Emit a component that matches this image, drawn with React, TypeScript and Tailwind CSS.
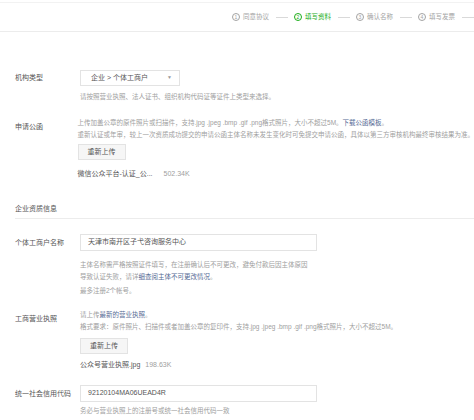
import React from "react";

const font = { fontFamily: '"Liberation Sans", "Noto Sans CJK SC", sans-serif' };

function Step({ n, label, active }: { n: string; label: string; active?: boolean }) {
  const c = active ? "text-[#1aad19] border-[#1aad19]" : "text-[#a3a3a3] border-[#a3a3a3]";
  return (
    <div className="flex items-center shrink-0">
      <span className={`w-[8px] h-[8px] rounded-full border-[0.8px] flex items-center justify-center text-[5px] leading-none ${c}`}>{n}</span>
      <span className={`ml-[3px] text-[6.5px] leading-none ${active ? "text-[#1aad19]" : "text-[#a3a3a3]"}`}>{label}</span>
      <span className="ml-[7px] mr-[6px] w-[12px] h-px bg-[#d9d9d9]" />
    </div>
  );
}

export default function App() {
  return (
    <div className="w-[474px] h-[420px] overflow-hidden bg-white relative" style={font}>
      <div className="mt-[2px] border-t border-[#f2f2f2]" />
      <div className="h-[29px] border-b border-[#ececec] flex items-center pl-[232px] whitespace-nowrap overflow-hidden">
        <Step n="1" label="同意协议" />
        <Step n="2" label="填写资料" active />
        <Step n="3" label="确认名称" />
        <Step n="4" label="填写发票" />
      </div>

      <div className="pl-[15px] pt-[38px] whitespace-nowrap">
        {/* 机构类型 */}
        <div className="flex">
          <div className="w-[65px] text-[7px] leading-[16px] text-[#555]">机构类型</div>
          <div>
            <div className="w-[100px] h-[16px] border border-[#e3e3e3] flex items-center justify-between px-[10px] text-[7px] text-[#555]">
              <span>企业 &gt; 个体工商户</span>
              <span className="text-[5px] text-[#999] mr-[-3px]">▼</span>
            </div>
            <div className="mt-[5px] text-[6.5px] leading-[12px] text-[#a0a0a0]">请按照营业执照、法人证书、组织机构代码证等证件上类型来选择。</div>
          </div>
        </div>

        {/* 申请公函 */}
        <div className="flex mt-[14px]">
          <div className="w-[65px] pt-[4px] text-[7px] leading-[12px] text-[#555]">申请公函</div>
          <div>
            <div className="text-[6.5px] leading-[12px] text-[#a0a0a0]">
              上传加盖公章的原件照片或扫描件，支持.jpg .jpeg .bmp .gif .png格式照片，大小不超过5M。<span className="text-[#576b95]">下载公函模板</span>。
            </div>
            <div className="text-[6.5px] leading-[12px] text-[#a0a0a0]">
              重新认证或年审，较上一次资质成功提交的申请公函主体名称未发生变化时可免提交申请公函，具体以第三方审核机构最终审核结果为准。
            </div>
            <div className="mt-[3px] w-[48px] h-[16px] bg-[#f6f6f6] border border-[#e3e3e3] flex items-center justify-center text-[7px] text-[#555]">重新上传</div>
            <div className="mt-[8px] text-[7px] leading-[12px] text-[#555]">
              微信公众平台-认证_公...<span className="ml-[11px] text-[#a0a0a0]">502.34K</span>
            </div>
          </div>
        </div>

        {/* section */}
        <div className="mt-[23px] pb-[3px] border-b border-[#ececec] text-[7px] leading-[12px] text-[#555]">企业资质信息</div>

        {/* 个体工商户名称 */}
        <div className="flex mt-[15px]">
          <div className="w-[65px] text-[7px] leading-[17px] text-[#555]">个体工商户名称</div>
          <div>
            <div className="w-[237px] h-[17px] border border-[#e3e3e3] flex items-center px-[7px] text-[7px] text-[#555]">天津市南开区子弋咨询服务中心</div>
            <div className="mt-[8px] text-[6.5px] leading-[12px] text-[#a0a0a0]">主体名称需严格按照证件填写，在注册确认后不可更改，避免付款后因主体原因</div>
            <div className="text-[6.5px] leading-[12px] text-[#a0a0a0]">导致认证失败，请详<span className="text-[#576b95]">细查阅主体不可更改情况</span>。</div>
            <div className="mt-[2px] text-[6.5px] leading-[12px] text-[#a0a0a0]">最多注册2个帐号。</div>
          </div>
        </div>

        {/* 工商营业执照 */}
        <div className="flex mt-[12px]">
          <div className="w-[65px] pt-[4px] text-[7px] leading-[12px] text-[#555]">工商营业执照</div>
          <div>
            <div className="text-[6.5px] leading-[12px] text-[#a0a0a0]">请上传<span className="text-[#576b95]">最新的营业执照</span>。</div>
            <div className="text-[6.5px] leading-[12px] text-[#a0a0a0]">格式要求：原件照片、扫描件或者加盖公章的复印件，支持.jpg .jpeg .bmp .gif .png格式照片，大小不超过5M。</div>
            <div className="mt-[5px] w-[48px] h-[16px] bg-[#f6f6f6] border border-[#e3e3e3] flex items-center justify-center text-[7px] text-[#555]">重新上传</div>
            <div className="mt-[5px] text-[7px] leading-[12px] text-[#555]">
              公众号营业执照.jpg<span className="ml-[5px] text-[#a0a0a0]">198.63K</span>
            </div>
          </div>
        </div>

        {/* 统一社会信用代码 */}
        <div className="flex mt-[14px]">
          <div className="w-[65px] text-[7px] leading-[17px] text-[#555]">统一社会信用代码</div>
          <div>
            <div className="w-[237px] h-[17px] border border-[#e3e3e3] flex items-center px-[7px] text-[7px] text-[#555]">92120104MA06UEAD4R</div>
            <div className="mt-[3px] text-[6.5px] leading-[12px] text-[#a0a0a0]">务必与营业执照上的注册号或统一社会信用代码一致</div>
          </div>
        </div>
      </div>
    </div>
  );
}
